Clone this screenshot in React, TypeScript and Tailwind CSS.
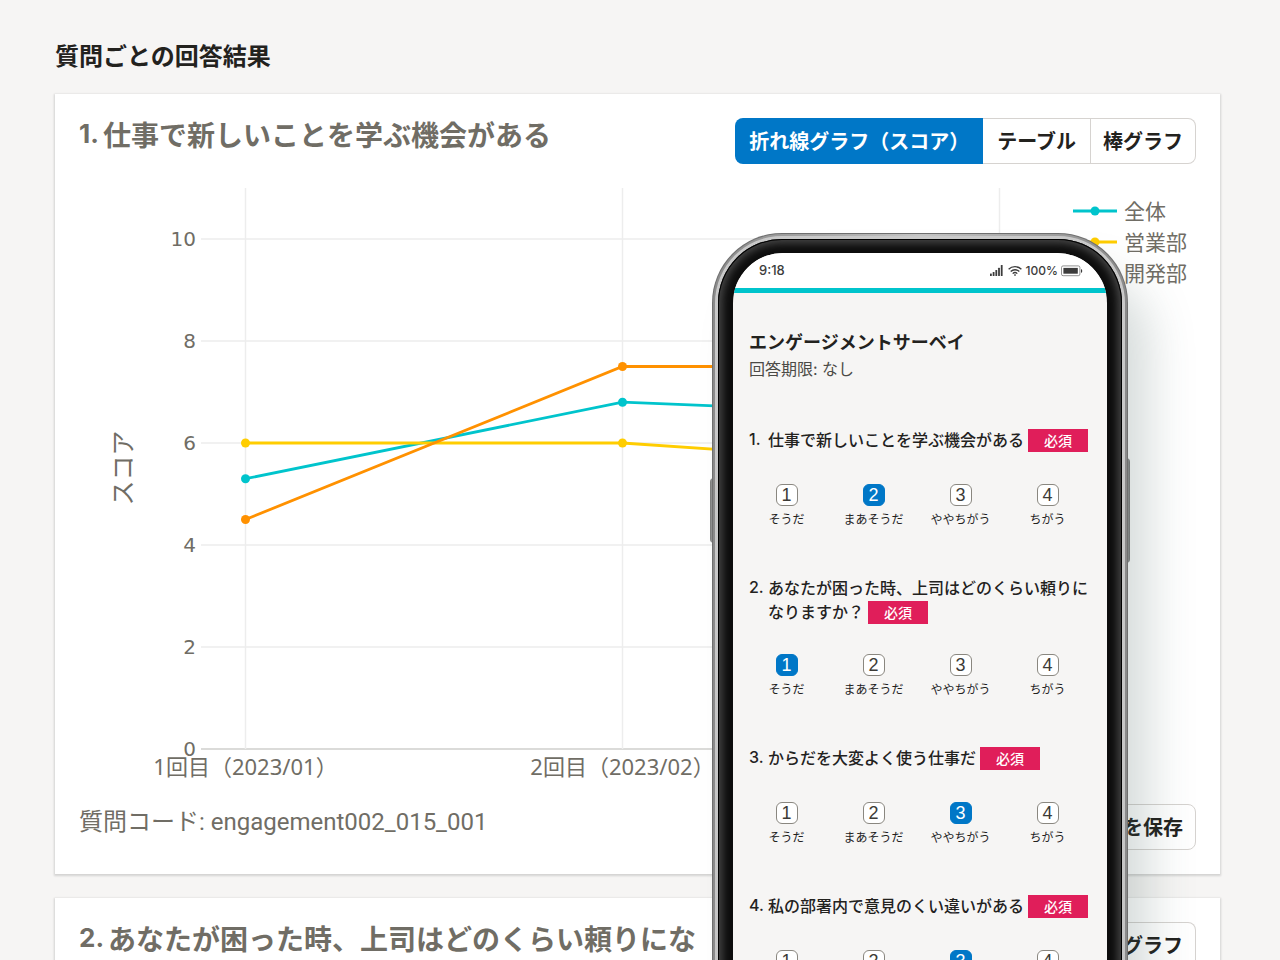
import React from 'react';
import clsx from 'clsx';

const JP = 'font-["Noto_Sans_CJK_JP",sans-serif]';

const periods = ['1回目（2023/01）', '2回目（2023/02）', ''];

const series = [
  { name: '全体', color: '#00c4cc', scores: [5.3, 6.8, 6.5] },
  { name: '営業部', color: '#ffcd00', scores: [6, 6, 5.5] },
  { name: '開発部', color: '#ff9100', scores: [4.5, 7.5, 7.5] },
];

const questions = [
  { id: 1, text: '仕事で新しいことを学ぶ機会がある', answer: 2 },
  { id: 2, text: 'あなたが困った時、上司はどのくらい頼りになりますか？', answer: 1 },
  { id: 3, text: 'からだを大変よく使う仕事だ', answer: 3 },
  { id: 4, text: '私の部署内で意見のくい違いがある', answer: 3 },
];

const choices = ['そうだ', 'まあそうだ', 'ややちがう', 'ちがう'];

const px = (i: number) => 166.5 + i * 377;
const py = (score: number) => 561 - score * 51;

function LineChart() {
  return (
    <svg viewBox="0 0 1117 600" className="mt-6 block w-full" fill="#706d65" fontSize="21">
      {[0, 2, 4, 6, 8, 10].map((v) => (
        <g key={v}>
          <line x1="122" x2="966" y1={py(v)} y2={py(v)} stroke={v === 0 ? '#cfcfcd' : '#ededed'} strokeWidth={v === 0 ? 1.5 : 1.3} />
          <text x="117" y={py(v) + 7} textAnchor="end" className='font-["DejaVu_Sans",sans-serif]' fontSize="20">
            {v}
          </text>
        </g>
      ))}
      {periods.map((label, i) => (
        <g key={i}>
          <line x1={px(i)} x2={px(i)} y1="0" y2="561" stroke="#ededed" strokeWidth="1.5" />
          {label && (
            <text x={px(i)} y="587" textAnchor="middle" fontSize="22" className='font-["Noto_Sans","Noto_Sans_CJK_JP",sans-serif]'>
              {label}
            </text>
          )}
        </g>
      ))}
      <text transform="translate(53 280) rotate(-90)" textAnchor="middle" fontSize="25" className='font-["Noto_Sans_CJK_JP",sans-serif]'>
        スコア
      </text>
      {series.map((s, i) => (
        <g key={s.name}>
          <polyline points={s.scores.map((v, n) => `${px(n)},${py(v)}`).join(' ')} fill="none" stroke={s.color} strokeWidth="2.8" />
          {s.scores.map((v, n) => (
            <circle key={n} cx={px(n)} cy={py(v)} r="4.5" fill={s.color} />
          ))}
          <line x1="994" x2="1038" y1={23 + i * 31} y2={23 + i * 31} stroke={s.color} strokeWidth="2.8" />
          <circle cx="1016" cy={23 + i * 31} r="4.5" fill={s.color} />
          <text x="1045" y={31 + i * 31} className='font-["Noto_Sans_CJK_JP",sans-serif]'>
            {s.name}
          </text>
        </g>
      ))}
    </svg>
  );
}

function ChartTabs() {
  return (
    <div className="flex h-[46px] shrink-0 text-xl font-bold text-[#23221e]">
      <button className="rounded-l-lg bg-[#0077c7] px-[14px] text-white">折れ線グラフ（スコア）</button>
      <button className="border border-l-0 border-[#d6d3d0] px-[14px]">テーブル</button>
      <button className="rounded-r-lg border border-l-0 border-[#d6d3d0] px-3">棒グラフ</button>
    </div>
  );
}

function CardHeader({ no, title }: { no: number; title: string }) {
  return (
    <div className="flex h-[46px] items-start justify-between gap-6">
      <h2 className="-mt-1 flex gap-1 text-[28px] leading-10 font-bold text-[#706d65]">
        <span className='shrink-0 font-["Inter",sans-serif] text-[26px]'>{no}.</span>
        {title}
      </h2>
      <ChartTabs />
    </div>
  );
}

function StatusBar() {
  return (
    <div className='flex h-[35px] items-center justify-between bg-white pr-6 pl-[26px] font-["Inter",sans-serif] text-xs font-medium text-[#3c3c3c]'>
      <span className="text-[13px]">9:18</span>
      <div className="flex items-center gap-1">
        <svg width="14" height="12" viewBox="0 0 14 12" fill="#3c3c3c">
          <rect x="0" y="8.5" width="1.8" height="2.5" rx=".5" />
          <rect x="2.7" y="7" width="1.8" height="4" rx=".5" />
          <rect x="5.4" y="5" width="1.8" height="6" rx=".5" />
          <rect x="8.1" y="2.8" width="1.8" height="8.2" rx=".5" />
          <rect x="10.8" y="0" width="1.8" height="11" rx=".5" />
        </svg>
        <svg width="14" height="12" viewBox="0 0 14 12" fill="none" stroke="#3c3c3c" strokeWidth="1.3">
          <path d="M.6 4.3a9.2 9.2 0 0 1 12.8 0" />
          <path d="M2.7 6.5a6.2 6.2 0 0 1 8.6 0" />
          <path d="M4.7 8.6a3.3 3.3 0 0 1 4.6 0" />
          <path d="M5.8 9.8a1.7 1.7 0 0 1 2.4 0L7 11.2z" fill="#3c3c3c" stroke="none" />
        </svg>
        <span>100%</span>
        <svg width="22" height="12" viewBox="0 0 22 12" className="-ml-px">
          <rect x=".5" y=".9" width="18.4" height="9.8" rx="1.6" fill="none" stroke="#777" strokeWidth=".8" />
          <rect x="2.4" y="2.9" width="14.4" height="5.8" fill="#3c3c3c" />
          <path d="M20 4v3.8c.8-.2 1.2-.9 1.2-1.9S20.800 4.200 20 4z" fill="#3c3c3c" />
        </svg>
      </div>
    </div>
  );
}

function Question({ id, text, answer }: { id: number; text: string; answer: number }) {
  return (
    <fieldset className="pb-[49px]">
      <legend className="flex min-h-[26px] w-full text-base leading-6 font-medium text-[#23221e]">
        <span className='w-[19px] shrink-0 font-["Inter",sans-serif]'>{id}.</span>
        <span>
          {text}
          <span className="mt-0.5 -mb-0.5 ml-1 inline-block h-[23px] w-[60px] bg-[#e01e5a] text-center align-top text-sm leading-[22px] text-white">
            必須
          </span>
        </span>
      </legend>
      <div className="-ml-[6px] grid grid-cols-4 pt-[31px]">
        {choices.map((choice, i) => (
          <label key={choice} className="relative flex flex-col items-center text-xs text-[#23221e]">
            <input type="radio" name={`q${id}`} defaultChecked={answer === i + 1} className="peer sr-only" />
            <span className='flex size-[22px] items-center justify-center rounded-md border border-[#8a8780] bg-white font-["Liberation_Sans",sans-serif] text-lg leading-none text-[#3c3b37] peer-checked:border-[#0077c7] peer-checked:bg-[#0077c7] peer-checked:text-white'>
              {i + 1}
            </span>
            <span className="mt-[5px] leading-[15px]">{choice}</span>
          </label>
        ))}
      </div>
    </fieldset>
  );
}

function Phone() {
  return (
    <div className="absolute top-[233px] right-[152px] h-[860px] w-[416px]">
      <div className="absolute top-[245px] -left-[2px] h-[65px] w-1 rounded-l-sm bg-linear-to-r from-[#777] to-[#bbb]" />
      <div className="absolute top-[225px] -right-[2px] h-[105px] w-1 rounded-r-sm bg-linear-to-l from-[#777] to-[#bbb]" />
      <div className="relative h-full rounded-[70px] bg-[#6f6f6f] p-px shadow-[28px_36px_48px_-8px_rgba(60,85,80,0.22)]">
        <div className="h-full rounded-[69px] bg-linear-to-r from-[#8a8a8a] via-[#c4c4c4] to-[#8a8a8a] p-[2px]">
          <div className="h-full rounded-[67px] bg-linear-to-b from-[#c9c9c9] to-[#c4c4c4] p-[3px]">
            <div className="h-full rounded-[64px] bg-[#0d0d0d] px-[15px] pt-[14px] shadow-[inset_0_0_0_1px_#000,inset_0_0_8px_4px_#4a4a4a]">
              <div className="h-full overflow-hidden rounded-[50px] bg-[#f6f5f4]">
                <StatusBar />
                <div className="h-[5px] bg-[#00c4cc]" />
                <div className="px-4 pt-[34px]">
                  <h2 className="text-lg leading-7 font-bold text-[#23221e]">エンゲージメントサーベイ</h2>
                  <p className='font-["Inter","Noto_Sans_CJK_JP",sans-serif] text-base leading-7 text-[#4b4a46]'>回答期限: なし</p>
                  <form className="mt-11">
                    {questions.map((q) => (
                      <Question key={q.id} {...q} />
                    ))}
                  </form>
                </div>
              </div>
            </div>
          </div>
        </div>
      </div>
    </div>
  );
}

export default function App() {
  return (
    <div className={clsx('relative h-screen overflow-hidden bg-[#f6f5f4] pr-[60px] pl-[55px]', JP)}>
      <h1 className="pt-10 text-2xl leading-[30px] font-bold text-[#23221e]">質問ごとの回答結果</h1>
      <section className="mt-6 bg-white p-6 shadow-[0_1px_2px_1px_rgba(3,3,2,0.14)]">
        <CardHeader no={1} title={questions[0].text} />
        <LineChart />
        <div className="mt-4 flex justify-between">
          <p className='font-["Roboto","Noto_Sans_CJK_JP",sans-serif] text-2xl leading-9 text-[#706d65]'>
            質問コード: engagement002_015_001
          </p>
          <button className="h-[46px] rounded-lg border border-[#d6d3d0] px-3 text-xl font-bold text-[#23221e]">画像を保存</button>
        </div>
      </section>
      <section className="mt-6 bg-white p-6 shadow-[0_1px_2px_1px_rgba(3,3,2,0.14)]">
        <CardHeader no={2} title={questions[1].text} />
      </section>
      <Phone />
    </div>
  );
}
